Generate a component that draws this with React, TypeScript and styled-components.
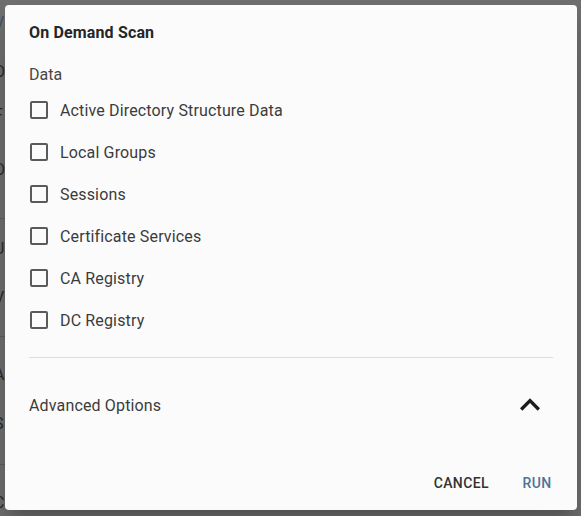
import React, { useState } from "react";
import styled, { createGlobalStyle } from "styled-components";

const GlobalStyle = createGlobalStyle`
  html, body {
    margin: 0;
    padding: 0;
    height: 100%;
  }
  body {
    font-family: Roboto, "Noto Sans", "Liberation Sans", sans-serif;
    background: #6f6f6f;
    overflow: hidden;
  }
  #root {
    height: 100%;
  }
`;

const options = [
  "Active Directory Structure Data",
  "Local Groups",
  "Sessions",
  "Certificate Services",
  "CA Registry",
  "DC Registry",
];

// Page content behind the overlay; only a sliver of it shows at the left.
type Behind = { letter?: string; gap: number; accent?: boolean };
const behindItems: Behind[] = [
  { letter: "V", gap: 11, accent: true },
  { letter: "O", gap: 25 },
  { letter: "F", gap: 19 },
  { letter: "O", gap: 31 },
  { gap: 36 },
  { letter: "U", gap: 18 },
  { letter: "V", gap: 25 },
  { gap: 26 },
  { letter: "A", gap: 26 },
  { letter: "S", gap: 25 },
  { gap: 28 },
  { letter: "C", gap: 26 },
];

export default function App() {
  const [checked, setChecked] = useState<boolean[]>(options.map(() => false));
  const [open, setOpen] = useState(true);

  const toggle = (index: number) =>
    setChecked((prev) => prev.map((v, i) => (i === index ? !v : v)));

  return (
    <>
      <GlobalStyle />
      <Backdrop>
        <BehindList>
          {behindItems.map((item, i) =>
            item.letter ? (
              <BehindItem key={i} $gap={item.gap} $accent={item.accent}>
                {item.letter}
              </BehindItem>
            ) : (
              <BehindRule key={i} $gap={item.gap} />
            )
          )}
        </BehindList>
        <Dialog>
          <Title>On Demand Scan</Title>
          <Legend>Data</Legend>
          <OptionList>
            {options.map((label, i) => (
              <OptionRow key={label} onClick={() => toggle(i)}>
                <Box $checked={checked[i]}>
                  {checked[i] && (
                    <svg viewBox="0 0 24 24" width="18" height="18">
                      <path
                        fill="#fff"
                        d="M9 16.17 4.83 12l-1.42 1.41L9 19 21 7l-1.41-1.41z"
                      />
                    </svg>
                  )}
                </Box>
                <OptionLabel>{label}</OptionLabel>
              </OptionRow>
            ))}
          </OptionList>
          <Divider />
          <AdvancedRow onClick={() => setOpen(!open)}>
            <AdvancedLabel>Advanced Options</AdvancedLabel>
            <Chevron $open={open} viewBox="0 0 24 24" width="40" height="40">
              <path d="M12 8l-6 6 1.41 1.41L12 10.83l4.59 4.58L18 14z" />
            </Chevron>
          </AdvancedRow>
          <Actions>
            <TextButton>Cancel</TextButton>
            <TextButton $primary>Run</TextButton>
          </Actions>
        </Dialog>
      </Backdrop>
    </>
  );
}

const Backdrop = styled.div`
  position: relative;
  height: 100%;
  padding: 5px 4px 6px 5px;
  box-sizing: border-box;
  background: #6f6f6f;
`;

const BehindList = styled.div`
  position: absolute;
  left: -6px;
  top: 0;
  width: 40px;
  display: flex;
  flex-direction: column;
`;

const BehindItem = styled.div<{ $gap: number; $accent?: boolean }>`
  margin-top: ${(p) => p.$gap}px;
  height: 24px;
  line-height: 24px;
  font-size: 16px;
  color: ${(p) => (p.$accent ? "#3d5468" : "#2a2a2a")};
`;

const BehindRule = styled.div<{ $gap: number }>`
  margin-top: ${(p) => p.$gap}px;
  height: 1px;
  background: #5f5f5f;
`;

const Dialog = styled.div`
  position: relative;
  height: 505px;
  background: #fbfbfb;
  border-radius: 4px;
  box-shadow: 0 11px 15px -7px rgba(0, 0, 0, 0.2),
    0 24px 38px 3px rgba(0, 0, 0, 0.14);
  display: flex;
  flex-direction: column;
  padding: 0 24px;
  box-sizing: border-box;
`;

const Title = styled.h2`
  margin: 0;
  padding-top: 16px;
  font-size: 16px;
  font-weight: 700;
  line-height: 24px;
  letter-spacing: 0.15px;
  color: #262626;
`;

const Legend = styled.div`
  margin-top: 18px;
  font-size: 16px;
  line-height: 24px;
  color: #474747;
`;

const OptionList = styled.div`
  margin-top: 2px;
  display: flex;
  flex-direction: column;
`;

const OptionRow = styled.label`
  height: 42px;
  display: flex;
  align-items: center;
  cursor: pointer;
`;

const Box = styled.span<{ $checked: boolean }>`
  width: 18px;
  height: 18px;
  margin-left: 1px;
  box-sizing: border-box;
  border: 2px solid ${(p) => (p.$checked ? "#4d7399" : "#5a5a5a")};
  background: ${(p) => (p.$checked ? "#4d7399" : "transparent")};
  border-radius: 2px;
  display: flex;
  align-items: center;
  justify-content: center;
  svg {
    flex: none;
  }
`;

const OptionLabel = styled.span`
  margin-left: 12px;
  font-size: 16px;
  color: #3b3b3b;
  letter-spacing: 0.15px;
`;

const Divider = styled.hr`
  margin: 16px 0 0;
  border: none;
  border-top: 1px solid #dedede;
`;

const AdvancedRow = styled.div`
  margin-top: 15px;
  height: 64px;
  display: flex;
  align-items: center;
  justify-content: space-between;
  cursor: pointer;
`;

const AdvancedLabel = styled.span`
  font-size: 16px;
  letter-spacing: 0.15px;
  color: #3b3b3b;
`;

const Chevron = styled.svg<{ $open: boolean }>`
  margin-right: 3px;
  fill: #1c1c1c;
  transform: rotate(${(p) => (p.$open ? "0deg" : "180deg")});
`;

const Actions = styled.div`
  margin-top: auto;
  margin-right: -16px;
  padding-bottom: 9px;
  display: flex;
  justify-content: flex-end;
  gap: 8px;
`;

const TextButton = styled.button<{ $primary?: boolean }>`
  min-width: 64px;
  height: 36px;
  padding: 0 8px;
  border: none;
  background: transparent;
  font-family: Roboto, "Noto Sans", sans-serif;
  font-size: 14px;
  font-weight: 500;
  letter-spacing: 0.4px;
  text-transform: uppercase;
  color: ${(p) => (p.$primary ? "#4d7399" : "#333333")};
  cursor: pointer;
  border-radius: 4px;
`;
